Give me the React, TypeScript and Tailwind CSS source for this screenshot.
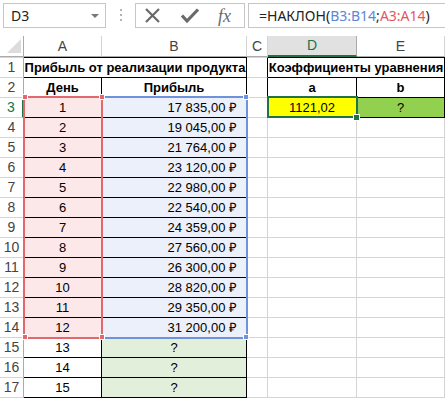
import type { ReactNode } from 'react'

const profits = [
  '17 835,00 ₽',
  '19 045,00 ₽',
  '21 764,00 ₽',
  '23 120,00 ₽',
  '22 980,00 ₽',
  '22 540,00 ₽',
  '24 359,00 ₽',
  '27 560,00 ₽',
  '26 300,00 ₽',
  '28 820,00 ₽',
  '29 350,00 ₽',
  '31 200,00 ₽',
]

function RowHead({ n, active = false, top = false }: { n: number; active?: boolean; top?: boolean }) {
  return (
    <div
      className={`flex items-center justify-center border-b border-b-[#d4d4d4] text-[14px] ${
        top ? 'h-[21px] border-t border-t-[#d4d4d4]' : 'h-5'
      } ${active ? 'border-r-2 border-r-[#217346] text-[#217346]' : 'border-r border-r-[#ababab] text-[#444]'}`}
    >
      {n}
    </div>
  )
}

function Cell({ className = '', children }: { className?: string; children?: ReactNode }) {
  return (
    <div className={`flex h-5 items-center whitespace-nowrap border-r border-b ${className}`}>{children}</div>
  )
}

function FormulaBar() {
  return (
    <div className="flex h-9 items-start bg-white pt-[3px] font-['Noto_Sans',sans-serif]">
      {/* Name box */}
      <div className="ml-[3px] flex h-[25px] w-[103px] items-center justify-between border border-[#c6c6c6] pl-[7px] pr-[6px] text-[14px] text-[#222]">
        <span>D3</span>
        <span className="h-0 w-0 border-x-[4px] border-t-[4px] border-x-transparent border-t-[#777]" />
      </div>
      {/* Separator dots */}
      <div className="ml-[14px] mt-[6px] flex flex-col gap-[3px]">
        <span className="h-[2px] w-[2px] bg-[#b5b5b5]" />
        <span className="h-[2px] w-[2px] bg-[#b5b5b5]" />
        <span className="h-[2px] w-[2px] bg-[#b5b5b5]" />
      </div>
      {/* Cancel / enter / function */}
      <div className="ml-[13px] flex h-[25px] w-[110px] items-center border border-[#c6c6c6] pl-[8px]">
        <svg width="17" height="17" viewBox="0 0 17 17">
          <path d="M2 2 L15 15 M15 2 L2 15" stroke="#6a6a6a" strokeWidth="2.2" fill="none" />
        </svg>
        <svg width="20" height="17" viewBox="0 0 20 17" className="ml-[19px]">
          <path d="M2 8.5 L7 14 L18 2.5" stroke="#6a6a6a" strokeWidth="3.2" fill="none" strokeLinejoin="miter" />
        </svg>
        <span className="ml-[18px] font-['Liberation_Serif',serif] text-[18px] italic leading-none text-[#6a6a6a]">fx</span>
      </div>
      {/* Formula input */}
      <div className="ml-[3px] flex h-[25px] flex-1 items-center border-y border-l border-[#c6c6c6] pl-[10px] text-[14px] text-[#222]">
        <span>=НАКЛОН(</span>
        <span className="text-[#5b86d9]">B3:B14</span>
        <span>;</span>
        <span className="text-[#e0585f]">A3:A14</span>
        <span>)</span>
      </div>
    </div>
  )
}

function Sheet() {
  const colHead = 'flex h-[21px] items-center justify-center border-r border-b border-r-[#d4d4d4] border-b-[#ababab] text-[14px] text-[#444]'
  return (
    <div className="relative font-['Liberation_Sans',sans-serif] text-[13px] text-black">
      <div className="grid grid-cols-[24px_78px_145px_21px_89px_88px]">
        {/* Column headers */}
        <div className="relative h-[21px] border-r border-b border-r-[#ababab] border-b-[#ababab]">
          <span className="absolute bottom-[3px] right-[2px] h-0 w-0 border-b-[14px] border-l-[14px] border-b-[#dcdcdc] border-l-transparent" />
        </div>
        <div className={colHead}>A</div>
        <div className={colHead}>B</div>
        <div className={colHead}>C</div>
        <div className="flex h-[21px] items-center justify-center border-r border-b-2 border-r-[#ababab] border-b-[#217346] bg-[#e1e1e1] text-[14px] text-[#217346]">
          D
        </div>
        <div className={colHead}>E</div>

        {/* Row 1 */}
        <RowHead n={1} top />
        <div className="col-span-2 flex h-[21px] items-center justify-center whitespace-nowrap border-t border-r border-b border-black font-bold">
          Прибыль от реализации продукта
        </div>
        <div className="h-[21px] border-t border-r border-b border-t-[#d4d4d4] border-r-black border-b-[#d4d4d4]" />
        <div className="col-span-2 flex h-[21px] items-center justify-center whitespace-nowrap border-t border-r border-b border-black font-bold">
          Коэффициенты уравнения
        </div>

        {/* Row 2 */}
        <RowHead n={2} />
        <Cell className="justify-center border-black font-bold">День</Cell>
        <Cell className="justify-center border-black font-bold">Прибыль</Cell>
        <Cell className="border-r-black border-b-[#d4d4d4]" />
        <Cell className="justify-center border-black font-bold">a</Cell>
        <Cell className="justify-center border-black font-bold">b</Cell>

        {/* Rows 3-14 */}
        {profits.map((p, i) => (
          <div key={p} className="contents">
            <RowHead n={i + 3} active={i === 0} />
            <Cell className="justify-center border-black bg-[#fce8e8]">{i + 1}</Cell>
            <Cell className="justify-end border-black bg-[#ebf0fb] pr-[9px]">{p}</Cell>
            {i === 0 ? (
              <>
                <Cell className="border-r-black border-b-[#d4d4d4]" />
                <Cell className="justify-center border-black bg-[#ffff00]">1121,02</Cell>
                <Cell className="justify-center border-black bg-[#92d050]">?</Cell>
              </>
            ) : (
              <>
                <Cell className="border-[#d4d4d4]" />
                <Cell className="border-[#d4d4d4]" />
                <Cell className="border-[#d4d4d4]" />
              </>
            )}
          </div>
        ))}

        {/* Rows 15-17 */}
        {[13, 14, 15].map((d, i) => (
          <div key={d} className="contents">
            <RowHead n={i + 15} />
            <Cell className="justify-center border-black">{d}</Cell>
            <Cell className="justify-center border-black bg-[#e2efda]">?</Cell>
            <Cell className="border-[#d4d4d4]" />
            <Cell className="border-[#d4d4d4]" />
            <Cell className="border-[#d4d4d4]" />
          </div>
        ))}
      </div>

      {/* Range highlight B3:B14 */}
      <div className="pointer-events-none absolute left-[101px] top-[60px] h-[243px] w-[147px] border-2 border-[#6e92dc]" />
      <span className="absolute left-[243px] top-[58px] h-[6px] w-[6px] border border-white bg-[#6e92dc]" />
      <span className="absolute left-[243px] top-[298px] h-[6px] w-[6px] border border-white bg-[#6e92dc]" />

      {/* Range highlight A3:A14 */}
      <div className="pointer-events-none absolute left-[23px] top-[60px] h-[243px] w-[80px] border-2 border-[#e2686e]" />
      <span className="absolute left-[22px] top-[58px] h-[6px] w-[6px] border border-white bg-[#e2686e]" />
      <span className="absolute left-[99px] top-[58px] h-[6px] w-[6px] border border-white bg-[#e2686e]" />
      <span className="absolute left-[22px] top-[298px] h-[6px] w-[6px] border border-white bg-[#e2686e]" />
      <span className="absolute left-[99px] top-[298px] h-[6px] w-[6px] border border-white bg-[#e2686e]" />

      {/* Active cell D3 */}
      <div className="pointer-events-none absolute left-[267px] top-[60px] h-[22px] w-[91px] border-2 border-[#217346]" />
      <span className="absolute left-[353px] top-[78px] h-[7px] w-[7px] border border-white bg-[#217346]" />
    </div>
  )
}

export default function App() {
  return (
    <div className="h-[399px] w-[445px] overflow-hidden bg-white">
      <FormulaBar />
      <Sheet />
    </div>
  )
}
